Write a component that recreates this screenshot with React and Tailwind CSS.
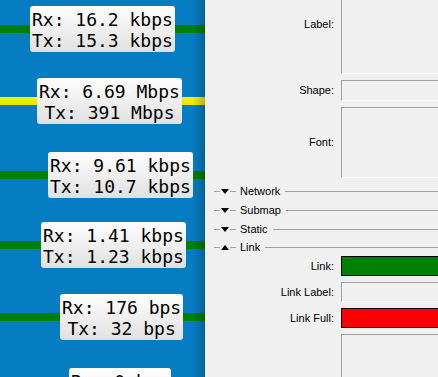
export default function App() {
  const mono = { fontFamily: '"DejaVu Sans Mono", monospace' };
  const Box = ({ pos, rx, tx }) => (
    <div
      className={`absolute ${pos} rounded-[3px] bg-linear-to-b from-[#fefefe] to-[#e0e0e0] px-[2px] pt-[3px] pb-[1px] text-center text-[18px] leading-[21px] text-black whitespace-pre`}
      style={mono}
    >
      <div>{rx}</div>
      <div>{tx}</div>
    </div>
  );

  const Tri = ({ up }) => (
    <svg width="8" height="5" viewBox="0 0 8 5" className="ml-[1px] mr-[1px] shrink-0">
      {up ? <polygon points="0,5 8,5 4,0" fill="#000" /> : <polygon points="0,0 8,0 4,5" fill="#000" />}
    </svg>
  );

  const Section = ({ name, up, h }) => (
    <div className={`flex items-center ${h} pl-[8px]`}>
      <div className="h-px w-[6px] bg-[#a0a0a0] shrink-0" />
      <Tri up={up} />
      <div className="h-px w-[6px] bg-[#a0a0a0] shrink-0" />
      <span className="ml-[4px] shrink-0">{name}</span>
      <div className="ml-[5px] h-px flex-1 bg-[#a0a0a0]" />
    </div>
  );

  const sunken = "border border-t-[#a0a0a0] border-l-[#a0a0a0] border-b-white border-r-white";

  return (
    <div className="flex h-[377px] w-[438px] overflow-hidden">
      <div className="relative h-full w-[205px] shrink-0 overflow-hidden bg-[#067cc2]">
        <div className="absolute left-0 top-[25px] h-[8px] w-full bg-[#008000]" />
        <div className="absolute left-0 top-[97px] h-[8px] w-full bg-linear-to-b from-[#f4f400] to-[#e4e400]" />
        <div className="absolute left-0 top-[171px] h-[8px] w-full bg-[#008000]" />
        <div className="absolute left-0 top-[241px] h-[8px] w-full bg-[#008000]" />
        <div className="absolute left-0 top-[313px] h-[8px] w-full bg-[#008000]" />

        <Box pos="left-[30px] top-[6px]" rx="Rx: 16.2 kbps" tx="Tx: 15.3 kbps" />
        <Box pos="left-[37px] top-[78px]" rx="Rx: 6.69 Mbps" tx="Tx: 391 Mbps" />
        <Box pos="left-[48px] top-[152px]" rx="Rx: 9.61 kbps" tx="Tx: 10.7 kbps" />
        <Box pos="left-[41px] top-[222px]" rx="Rx: 1.41 kbps" tx="Tx: 1.23 kbps" />
        <Box pos="left-[60px] top-[294px]" rx="Rx: 176 bps" tx="Tx: 32 bps" />
        <Box pos="left-[69px] top-[368px]" rx="Rx: 0 bps" tx="Tx: 0 bps" />

        <div className="absolute right-0 top-0 h-full w-[12px] bg-linear-to-r from-transparent to-[rgba(0,0,0,0.22)]" />
      </div>
      <div className="h-full w-px shrink-0 bg-[#fafafa]" />
      <div
        className="flex-1 overflow-hidden bg-[#f0f0f0] text-[11px] text-black"
        style={{ fontFamily: '"Liberation Sans", Arial, sans-serif' }}
      >
        <div className="-mt-[25px] flex h-[99px] items-center">
          <span className="w-[128px] shrink-0 text-right">Label:</span>
          <div className={`ml-[7px] h-full w-[140px] shrink-0 ${sunken}`} />
        </div>
        <div className="mt-[6px] flex h-[21px] items-center">
          <span className="w-[128px] shrink-0 text-right">Shape:</span>
          <div className={`ml-[7px] h-full w-[140px] shrink-0 ${sunken}`} />
        </div>
        <div className="mt-[6px] flex h-[71px] items-center">
          <span className="w-[128px] shrink-0 text-right">Font:</span>
          <div className={`ml-[7px] h-full w-[140px] shrink-0 ${sunken}`} />
        </div>
        <div className="mt-[4px]">
          <Section name="Network" h="h-[19px]" />
          <Section name="Submap" h="h-[19px]" />
          <Section name="Static" h="h-[19px]" />
          <Section name="Link" up h="h-[17px]" />
        </div>
        <div className="flex h-[20px] items-center">
          <span className="w-[128px] shrink-0 text-right">Link:</span>
          <div className="ml-[7px] h-full w-[140px] shrink-0 border border-black bg-[#008000]" />
        </div>
        <div className="mt-[6px] flex h-[20px] items-center">
          <span className="w-[128px] shrink-0 text-right">Link Label:</span>
          <div className={`ml-[7px] h-full w-[140px] shrink-0 ${sunken}`} />
        </div>
        <div className="mt-[6px] flex h-[20px] items-center">
          <span className="w-[128px] shrink-0 text-right">Link Full:</span>
          <div className="ml-[7px] h-full w-[140px] shrink-0 border border-black bg-[#ff0000]" />
        </div>
        <div className="mt-[6px] flex h-[60px] items-center">
          <span className="w-[128px] shrink-0 text-right"></span>
          <div className={`ml-[7px] h-full w-[140px] shrink-0 ${sunken}`} />
        </div>
      </div>
    </div>
  );
}
